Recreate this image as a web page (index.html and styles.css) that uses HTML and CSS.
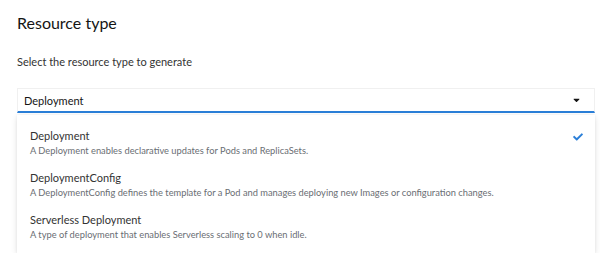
FILE: index.html
```html
<!DOCTYPE html>
<html lang="en">
<head>
    <meta charset="UTF-8">
    <title>Resource type</title>
    <link rel="stylesheet" href="styles.css">
</head>
<body>

<div class="section">
    <h2 class="title">Resource type</h2>
    <p class="help">Select the resource type to generate</p>

    <div class="select">
        <button class="toggle">
            <span class="toggle-text">Deployment</span>
            <svg class="caret" viewBox="0 0 320 512" width="7" height="10"><path d="M31.3 192h257.3c17.8 0 26.7 21.5 14.1 34.1L174.1 354.8c-7.8 7.8-20.5 7.8-28.3 0L17.2 226.1C4.6 213.5 13.5 192 31.3 192z"/></svg>
        </button>
        <ul class="menu">
            <li class="item">
                <div class="item-main">
                    <div class="item-name">Deployment</div>
                    <div class="item-desc">A Deployment enables declarative updates for Pods and ReplicaSets.</div>
                </div>
                <svg class="check" viewBox="0 0 512 512" width="10" height="10"><path d="M173.9 439.4l-166.4-166.4c-10-10-10-26.2 0-36.2l36.2-36.2c10-10 26.2-10 36.2 0L192 312.7 432.1 72.6c10-10 26.2-10 36.2 0l36.2 36.2c10 10 10 26.2 0 36.2L210.1 439.4c-10 10-26.2 10-36.2 0z"/></svg>
            </li>
            <li class="item">
                <div class="item-main">
                    <div class="item-name">DeploymentConfig</div>
                    <div class="item-desc">A DeploymentConfig defines the template for a Pod and manages deploying new Images or configuration changes.</div>
                </div>
            </li>
            <li class="item">
                <div class="item-main">
                    <div class="item-name">Serverless Deployment</div>
                    <div class="item-desc">A type of deployment that enables Serverless scaling to 0 when idle.</div>
                </div>
            </li>
        </ul>
    </div>
</div>

</body>
</html>
```

FILE: styles.css
```css
body {
    margin: 0;
    background-color: #fff;
    font-family: Lato, "Open Sans", sans-serif;
    color: #151515;
    overflow: hidden;
}
.section {
    padding: 11px 5px 0 17px;
}
.title {
    margin: 0;
    font-size: 16px;
    font-weight: 400;
    line-height: 24px;
}
.help {
    margin: 19px 0 0;
    font-size: 11px;
    line-height: 16px;
    color: #333;
}
.select {
    margin-top: 18px;
    position: relative;
}
.toggle {
    display: flex;
    align-items: center;
    justify-content: space-between;
    width: 100%;
    height: 25px;
    padding: 0 14px 0 6px;
    border: 1px solid #f0f0f0;
    border-bottom: 2px solid #2b7fd8;
    background: #fff;
    font-family: inherit;
    font-size: 11px;
    color: #151515;
    box-sizing: border-box;
}
.caret {
    fill: #151515;
}
.menu {
    list-style: none;
    margin: 2px 0 0;
    padding: 6px 0;
    background: #fff;
    box-shadow: 0 2px 6px rgba(3, 3, 3, 0.12), 0 0 2px rgba(3, 3, 3, 0.06);
}
.item {
    display: flex;
    align-items: flex-start;
    justify-content: space-between;
    padding: 7px 12px 5px 13px;
}
.item-name {
    font-size: 11px;
    line-height: 16px;
    color: #333;
}
.item-desc {
    font-size: 9.3px;
    line-height: 14px;
    color: #6a6e73;
}
.check {
    fill: #2b7fd8;
    margin-top: 4px;
}
```
